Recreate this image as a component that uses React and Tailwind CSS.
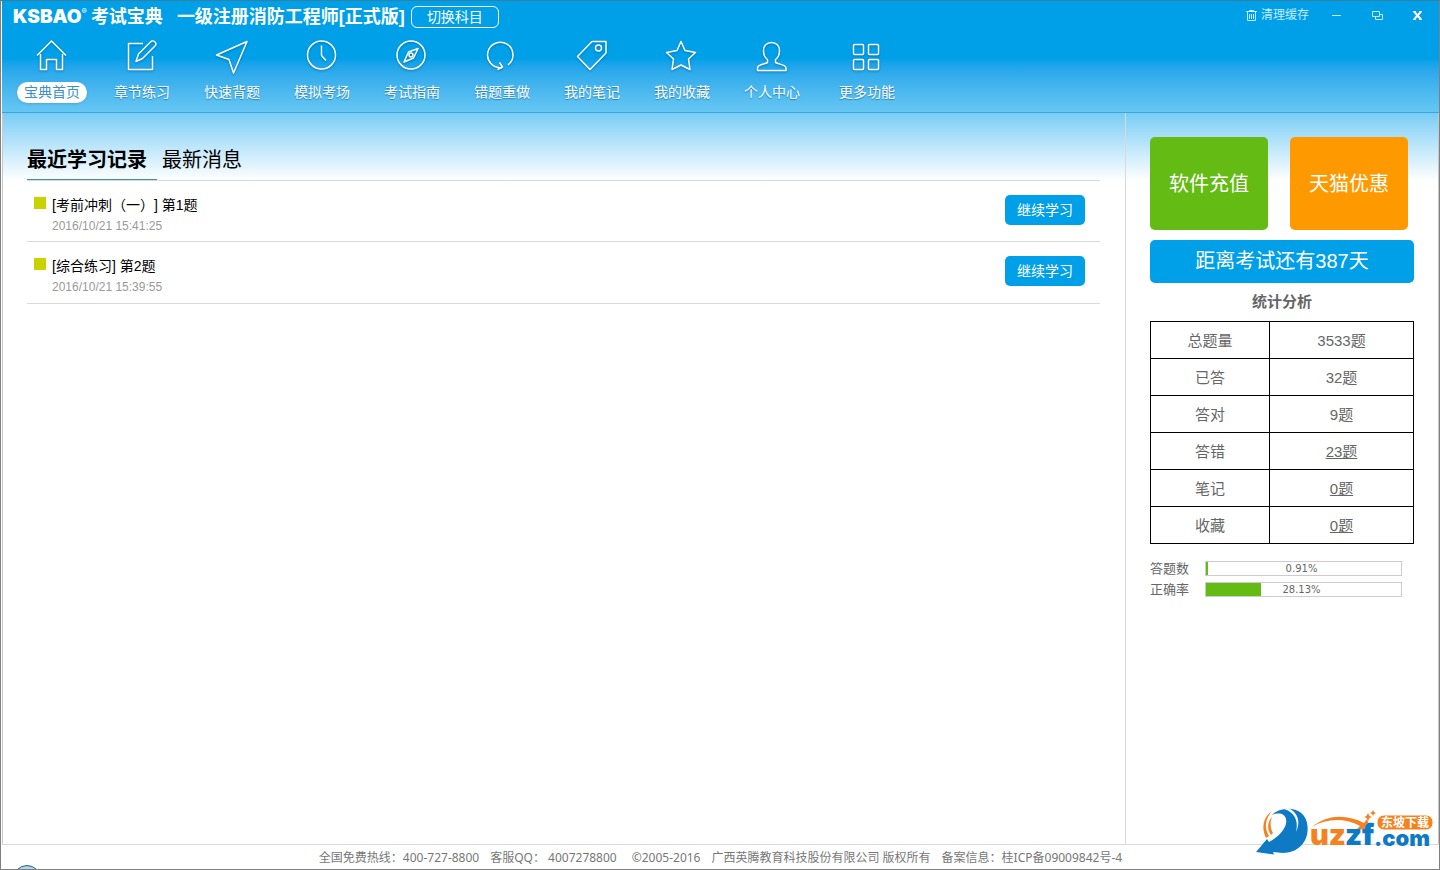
import React, { useState } from 'react';

const navItems = [
  {
    label: '宝典首页',
    icon: (
      <>
        <path d="M3 17.5L17.5 3L32 17.5" />
        <path d="M6.5 16V31.5H12.5V21.5H22.5V31.5H28.5V16" />
      </>
    ),
  },
  {
    label: '章节练习',
    icon: (
      <>
        <path d="M19 5.5H4.5V31.5H28.5V18" />
        <path d="M12 23.5L14.5 16L26.5 4A2.9 2.9 0 0 1 31 8L18.5 20.5Z" />
      </>
    ),
  },
  { label: '快速背题', icon: <path d="M33 3.5L2.5 17L15 21.5L19.5 35Z" /> },
  {
    label: '模拟考场',
    icon: (
      <>
        <circle cx="17.5" cy="17" r="14" />
        <path d="M17.5 7.5V17.5L22 22.5" />
      </>
    ),
  },
  {
    label: '考试指南',
    icon: (
      <>
        <circle cx="17" cy="17" r="14" />
        <path d="M24 10.5L14.500 14L10 24L19.500 20Z" />
        <circle cx="17" cy="17" r="2" />
      </>
    ),
  },
  {
    label: '错题重做',
    icon: (
      <>
        <path d="M24 27A12.7 12.7 0 1 0 18 29.500" />
        <path d="M15.5 24.5L18.5 29L13.5 31.5" />
      </>
    ),
  },
  {
    label: '我的笔记',
    icon: (
      <>
        <path d="M18 3.5H32V15L16 31.5L3.5 18.5Z" />
        <circle cx="24.5" cy="10" r="3" />
      </>
    ),
  },
  {
    label: '我的收藏',
    icon: <path d="M17 3.5L21 12.5L31.5 14.5L24.5 21L26 31.5L17 27L8 31.5L9.5 21L2.500 14.5L13 12.5Z" />,
  },
  {
    label: '个人中心',
    icon: (
      <path d="M17.5 4.5C12.5 4.5 9.5 8 9.5 12.5C9.5 17 10.5 19.5 13.5 21.5V24.5C10 26.5 3.5 26.5 3.5 30V32.5H32V30C32 26.5 25 26.5 21.5 24.5V21.5C24.5 19.5 25.5 17 25.5 12.5C25.5 8 22.5 4.5 17.5 4.5Z" />
    ),
  },
  {
    label: '更多功能',
    icon: (
      <>
        <rect x="4.5" y="6.5" width="10" height="10" rx="1" />
        <rect x="19.5" y="6.5" width="10" height="10" rx="1" />
        <rect x="4.5" y="21.5" width="10" height="10" rx="1" />
        <rect x="19.5" y="21.5" width="10" height="10" rx="1" />
      </>
    ),
  },
];

const records = [
  { title: '[考前冲刺（一）] 第1题', time: '2016/10/21 15:41:25' },
  { title: '[综合练习] 第2题', time: '2016/10/21 15:39:55' },
];

const stats = [
  { name: '总题量', value: '3533题' },
  { name: '已答', value: '32题' },
  { name: '答对', value: '9题' },
  { name: '答错', value: '23题', link: true },
  { name: '笔记', value: '0题', link: true },
  { name: '收藏', value: '0题', link: true },
];

const rates = [
  { name: '答题数', value: 0.91 },
  { name: '正确率', value: 28.13 },
];

const Header = () => {
  const [active, setActive] = useState('宝典首页');

  return (
    <header className="border-b border-[#3da5d9] bg-linear-to-b from-[#00a0e9] from-52% to-[#66c7f3] text-white">
      <div className="flex h-8 items-center pl-[11px]">
        <div className="flex items-center font-['Inter','Noto_Sans_CJK_SC',sans-serif] font-black">
          <span className="text-[19px] leading-5">KSBAO</span>
          <span className="mb-3 text-[8px] font-normal leading-2">®</span>
          <span className="ml-1 text-lg font-bold leading-5">考试宝典</span>
        </div>
        <h1 className="ml-3.5 text-lg font-bold leading-5">一级注册消防工程师[正式版]</h1>
        <button type="button" className="ml-1.5 h-[22px] rounded-md border border-white px-[15px] text-sm leading-5">
          切换科目
        </button>
        <div className="ml-auto flex items-center pr-[17px] pb-1 text-[#c5ecff]">
          <button type="button" className="flex items-center gap-1 text-xs leading-4">
            <svg width="11" height="11" viewBox="0 0 11 11" fill="none" stroke="currentColor">
              <path d="M0 1.5H11M3.5 1V.5H7.5V1M1.5 2V10.5H9.5V2M3.5 4V9M5.5 4V9M7.5 4V9" />
            </svg>
            清理缓存
          </button>
          <button type="button" aria-label="最小化" className="ml-[23px] w-[9px]">
            <svg width="9" height="10" viewBox="0 0 9 10" stroke="currentColor">
              <path d="M0 5.5H9" />
            </svg>
          </button>
          <button type="button" aria-label="还原" className="ml-[31px]">
            <svg width="11" height="9" viewBox="0 0 11 9" fill="none" stroke="currentColor">
              <path d="M.5.5H7.5V5.5H.5ZM7.5 3.5H10.5V8.5H3.5V5.5" />
            </svg>
          </button>
          <button type="button" aria-label="关闭" className="ml-[30px] text-white">
            <svg width="9" height="9" viewBox="0 0 9 9" stroke="currentColor" strokeWidth="2">
              <path d="M1 .5L8 8.5M8 .5L1 8.5" />
              <path d="M0 .5H3M6 .5H9M0 8.5H3M6 8.5H9" strokeWidth="1" />
            </svg>
          </button>
        </div>
      </div>
      <nav className="flex h-[79px] pt-[5px] pl-[5px]">
        {navItems.map((item) => (
          <button
            key={item.label}
            type="button"
            onClick={() => setActive(item.label)}
            className="flex w-[90px] flex-col items-center gap-2 text-sm last:ml-[5px]"
          >
            <svg
              width="36"
              height="36"
              viewBox="0 0 36 36"
              fill="none"
              stroke="currentColor"
              strokeWidth="1.5"
              strokeLinejoin="round"
              className="drop-shadow-[0_1px_1px_rgba(0,70,120,0.5)]"
            >
              {item.icon}
            </svg>
            <span
              className={
                item.label === active
                  ? 'rounded-full bg-white px-[7px] leading-[21px] text-[#3d8fc9] shadow-sm'
                  : 'leading-[21px] text-shadow-[0_1px_1px_rgba(0,70,120,0.5)]'
              }
            >
              {item.label}
            </span>
          </button>
        ))}
      </nav>
    </header>
  );
};

const Records = () => (
  <section className="flex-1 border-r border-[#d9d9d9] pt-[30px] pr-[25px] pl-6">
    <div className="flex border-b border-[#d9d9d9] text-xl leading-8 text-black">
      <button type="button" className="h-[37px] w-[130px] border-b border-[#3d8fb5] pb-0.5 text-left font-bold">
        最近学习记录
      </button>
      <button type="button" className="h-[37px] px-[5px] pb-1">
        最新消息
      </button>
    </div>
    <ul>
      {records.map((record) => (
        <li key={record.time} className="flex border-b border-[#d9d9d9] pt-3.5 pr-[15px] pb-4 pl-[7px] last:pb-[17px]">
          <span className="mt-0.5 size-3 bg-[#c8d200]"></span>
          <div className="ml-1.5 h-[30px]">
            <p className="text-sm leading-5 text-black [text-spacing-trim:space-all]">{record.title}</p>
            <p className="text-xs leading-[22px] text-[#999]">{record.time}</p>
          </div>
          <button type="button" className="ml-auto h-[30px] w-20 rounded-[5px] bg-[#00a0e9] text-sm text-white">
            继续学习
          </button>
        </li>
      ))}
    </ul>
  </section>
);

const Sidebar = () => (
  <aside className="w-[312px] px-6 pt-6 text-[#666]">
    <div className="flex gap-[22px] text-xl text-white">
      <button type="button" className="h-[93px] w-[118px] rounded-[5px] bg-[#64bb14]">
        软件充值
      </button>
      <button type="button" className="h-[93px] w-[118px] rounded-[5px] bg-[#ff9900]">
        天猫优惠
      </button>
    </div>
    <p className="mt-2.5 h-[43px] rounded-[5px] bg-[#00a0e9] text-center text-xl leading-[43px] text-white">
      距离考试还有387天
    </p>
    <h2 className="pt-[9px] pb-[9px] text-center text-[15px] font-bold leading-5">统计分析</h2>
    <table className="w-full border-collapse text-center text-[15px]">
      <tbody>
        {stats.map((stat) => (
          <tr key={stat.name} className="h-[37px]">
            <th scope="row" className="w-[119px] border border-black p-0 pt-0.5 font-normal">
              {stat.name}
            </th>
            <td className="border border-black p-0 pt-0.5">
              {stat.link ? (
                <a href="#" className="underline">
                  {stat.value}
                </a>
              ) : (
                stat.value
              )}
            </td>
          </tr>
        ))}
      </tbody>
    </table>
    <div className="mt-3.5">
      {rates.map((rate) => (
        <div key={rate.name} className="flex h-[21px] items-center text-[13px]">
          <span className="w-[55px]">{rate.name}</span>
          <div className="relative h-[15px] w-[197px] border border-[#ccc]">
            <div className="h-full bg-[#64bb14]" style={{ width: `${Math.max(rate.value, 1.2)}%` }}></div>
            <span className="absolute inset-0 pr-1 text-center font-['DejaVu_Sans',sans-serif] text-[10px] leading-[13px]">
              {rate.value}%
            </span>
          </div>
        </div>
      ))}
    </div>
  </aside>
);

const SiteBadge = () => (
  <svg className="absolute right-1 bottom-2.5" width="180" height="56" viewBox="0 0 180 56" fill="none">
    <path d="M17 8C8 14 6 25 11 35L14 33C9 25 10 16 17 8Z" fill="#f5821f" />
    <path d="M17 14C12 19 12 27 16 32L18 30C15 25 15 19 17 14Z" fill="#f5821f" />
    <path
      d="M17 12C27 2 51 3 52.500 23C54 40 42 50 28 50L18 49L19 51.500L1 49L12 36L14 39C24 34 33 24 31 16C30 11 24 9 17 12Z"
      fill="#0f7ac4"
    />
    <path d="M29 6C39 9 44 17 41 29C46 19 43 9 33 5Z" fill="#fff" />
    <path d="M57 24C72 11 92 11 109 20L112 16L116 27L102 26L105 23C90 15 72 15 57 24Z" fill="#f5821f" />
    <path d="M113 10L114.500 13L117 14L114.500 15L113 18L111.500 15L109 14L111.500 13Z" fill="#f5821f" />
    <path d="M118 7L119 9L121 10L119 11L118 13L117 11L115 10L117 9Z" fill="#f5821f" />
    <g fontFamily="Inter, sans-serif" fontWeight="900">
      <text x="55" y="42" fill="#f5821f" fontSize="29">uz</text>
      <text x="90" y="42" fill="#0f7ac4" fontSize="29">zf</text>
      <text x="119" y="43" fill="#0f7ac4" fontSize="22">.com</text>
    </g>
    <rect x="122" y="12" width="56" height="15" rx="7" fill="#f5821f" stroke="#fff" />
    <text x="126" y="24" fill="#fff" fontFamily="Noto Sans CJK SC, sans-serif" fontWeight="700" fontSize="12">
      东坡下载
    </text>
  </svg>
);

const App = () => (
  <div className="relative flex min-h-screen flex-col overflow-hidden border border-[#808080] border-t-[#3a7f9e] bg-white pl-px font-['Liberation_Sans','Noto_Sans_CJK_SC',sans-serif]">
    <Header />
    <main className="flex flex-1 border-x border-[#c8c8c8] bg-linear-to-b from-[#76cdf5] to-white to-[68px]">
      <Records />
      <Sidebar />
    </main>
    <footer className="flex h-[25px] justify-center gap-[11px] border-t border-[#d9d9d9] pt-px font-['Noto_Sans','Noto_Sans_CJK_SC',sans-serif] text-xs leading-6 text-[#777]">
      <span>全国免费热线：400-727-8800</span>
      <span>客服QQ： 4007278800</span>
      <span className="ml-1">©2005-2016</span>
      <span>广西英腾教育科技股份有限公司 版权所有</span>
      <span>备案信息：桂ICP备09009842号-4</span>
    </footer>
    <div className="absolute -bottom-6 left-3 size-7 rounded-full border border-[#2f5f80] bg-[#b5d3e8]"></div>
    <SiteBadge />
  </div>
);

export default App;
